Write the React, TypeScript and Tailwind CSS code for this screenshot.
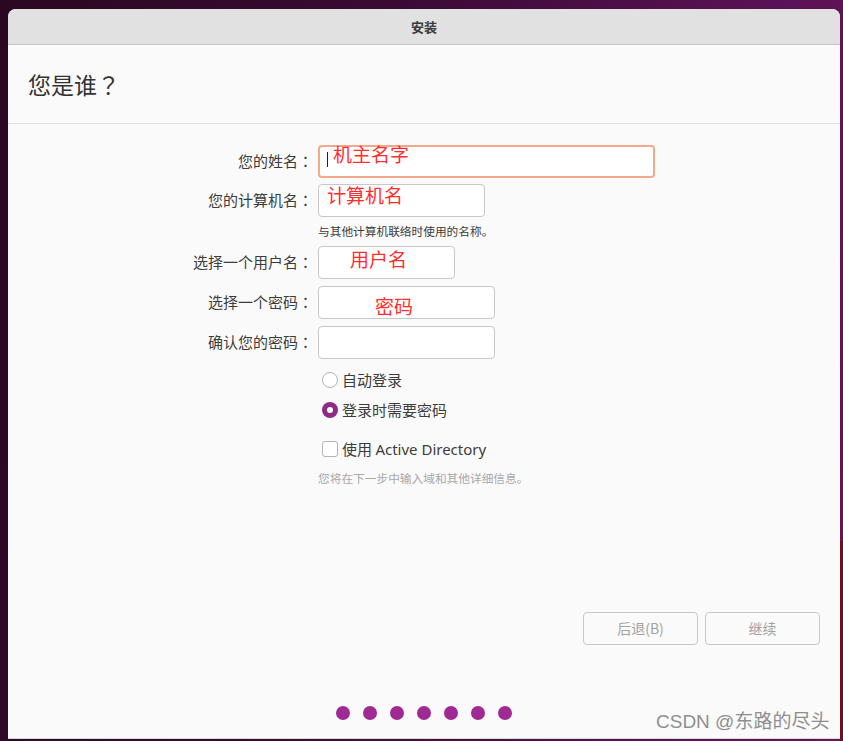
import React from "react";

const cjk = { fontFamily: '"Noto Sans CJK SC", "Noto Sans", sans-serif' };
const tc = { fontFamily: '"Noto Sans CJK TC", "Noto Sans CJK SC", sans-serif' };

function Row({ label, width, children, focused }: { label: string; width: number; children?: React.ReactNode; focused?: boolean }) {
  return (
    <div className="flex items-center h-[33px]">
      <div className="w-[304px] flex justify-end items-center text-[15px] text-[#3c3c3c]">
        <span>{label}</span>
        <span className="inline-block w-[14px] text-center" style={tc}>：</span>
      </div>
      <div
        className={
          "relative ml-[6px] h-[33px] rounded-[4px] bg-white " +
          (focused ? "border-2 border-[#f3a88c]" : "border border-[#c8c8c8]")
        }
        style={{ width }}
      >
        {children}
      </div>
    </div>
  );
}

export default function App() {
  return (
    <div
      className="relative w-[843px] h-[741px] overflow-hidden bg-[linear-gradient(100deg,#2a0822_0%,#3a0a33_40%,#5a1256_80%,#6a1456_100%)]"
      style={cjk}
    >
      <div className="absolute right-0 bottom-0 w-[3px] h-[200px] bg-[#6e101f]" />
      <div className="ml-[8px] mt-[9px] w-[832px] h-[730px] flex flex-col bg-[#fafafa] rounded-t-[8px] overflow-hidden border-b border-[#d8d8d8]">
        <div className="h-[36px] shrink-0 bg-[#e1e1e1] border-b border-[#c6c6c6] flex items-center justify-center text-[13px] font-bold text-[#3a3a3a]">
          安装
        </div>
        <div className="h-[79px] shrink-0 border-b border-[#dedede] flex items-center pl-[20px] text-[23px] text-[#333333]">
          <span>您是谁</span>
          <span style={tc}>？</span>
        </div>
        <div className="flex-1 flex flex-col pt-[21px]">
          <Row label="您的姓名" width={337} focused>
            <div className="absolute left-[7px] top-[5px] w-[1px] h-[15px] bg-[#222]" />
            <div className="absolute left-[13px] top-[-6px] text-[19px] text-[#ff2e2e] leading-[26px]">机主名字</div>
          </Row>
          <div className="mt-[6px]">
            <Row label="您的计算机名" width={167}>
              <div className="absolute left-[8px] top-[-3px] text-[19px] text-[#ff2e2e] leading-[26px]">计算机名</div>
            </Row>
          </div>
          <div className="mt-[6px] h-[16px] pl-[310px] text-[11.7px] leading-[16px] text-[#3c3c3c]">与其他计算机联络时使用的名称。</div>
          <div className="mt-[7px]">
            <Row label="选择一个用户名" width={137}>
              <div className="absolute left-[31px] top-[-1px] text-[19px] text-[#ff2e2e] leading-[26px]">用户名</div>
            </Row>
          </div>
          <div className="mt-[7px]">
            <Row label="选择一个密码" width={177}>
              <div className="absolute left-[56px] top-[6px] text-[19px] text-[#ff2e2e] leading-[26px]">密码</div>
            </Row>
          </div>
          <div className="mt-[7px]">
            <Row label="确认您的密码" width={177} />
          </div>
          <div className="mt-[11px] h-[20px] pl-[314px] flex items-center gap-[4px] text-[15px] text-[#3c3c3c]">
            <div className="w-[16px] h-[16px] rounded-full border border-[#b4b4b4] bg-white" />
            <span>自动登录</span>
          </div>
          <div className="mt-[10px] h-[20px] pl-[314px] flex items-center gap-[4px] text-[15px] text-[#3c3c3c]">
            <div className="w-[16px] h-[16px] rounded-full bg-[#8e2b84] flex items-center justify-center">
              <div className="w-[6px] h-[6px] rounded-full bg-white" />
            </div>
            <span>登录时需要密码</span>
          </div>
          <div className="mt-[19px] h-[20px] pl-[314px] flex items-center gap-[4px] text-[15px] text-[#3c3c3c]">
            <div className="w-[16px] h-[16px] rounded-[3px] border border-[#b4b4b4] bg-white" />
            <span>
              使用 <span style={{ fontFamily: '"Noto Sans", sans-serif' }}>Active Directory</span>
            </span>
          </div>
          <div className="mt-[11px] h-[16px] pl-[310px] text-[11.7px] leading-[16px] text-[#a8a8a8]">您将在下一步中输入域和其他详细信息。</div>
          <div className="mt-auto flex justify-end gap-[7px] pr-[20px]">
            <div className="w-[115px] h-[33px] rounded-[4px] border border-[#c8c8c8] flex items-center justify-center text-[14px] text-[#a3a3a3]">
              后退(B)
            </div>
            <div className="w-[115px] h-[33px] rounded-[4px] border border-[#c8c8c8] flex items-center justify-center text-[14px] text-[#a3a3a3]">
              继续
            </div>
          </div>
          <div className="mt-[61px] mb-[18px] pl-[328px] flex gap-[13px]">
            {[0, 1, 2, 3, 4, 5, 6].map((i) => (
              <div key={i} className="w-[14px] h-[14px] rounded-full bg-[#a02a94]" />
            ))}
          </div>
        </div>
      </div>
      <div className="absolute left-[656px] top-[709px] text-[19px] leading-[26px] text-[#8f8f8f]" style={{ fontFamily: '"Liberation Sans", "Noto Sans CJK SC", sans-serif' }}>
        CSDN @东路的尽头
      </div>
    </div>
  );
}
